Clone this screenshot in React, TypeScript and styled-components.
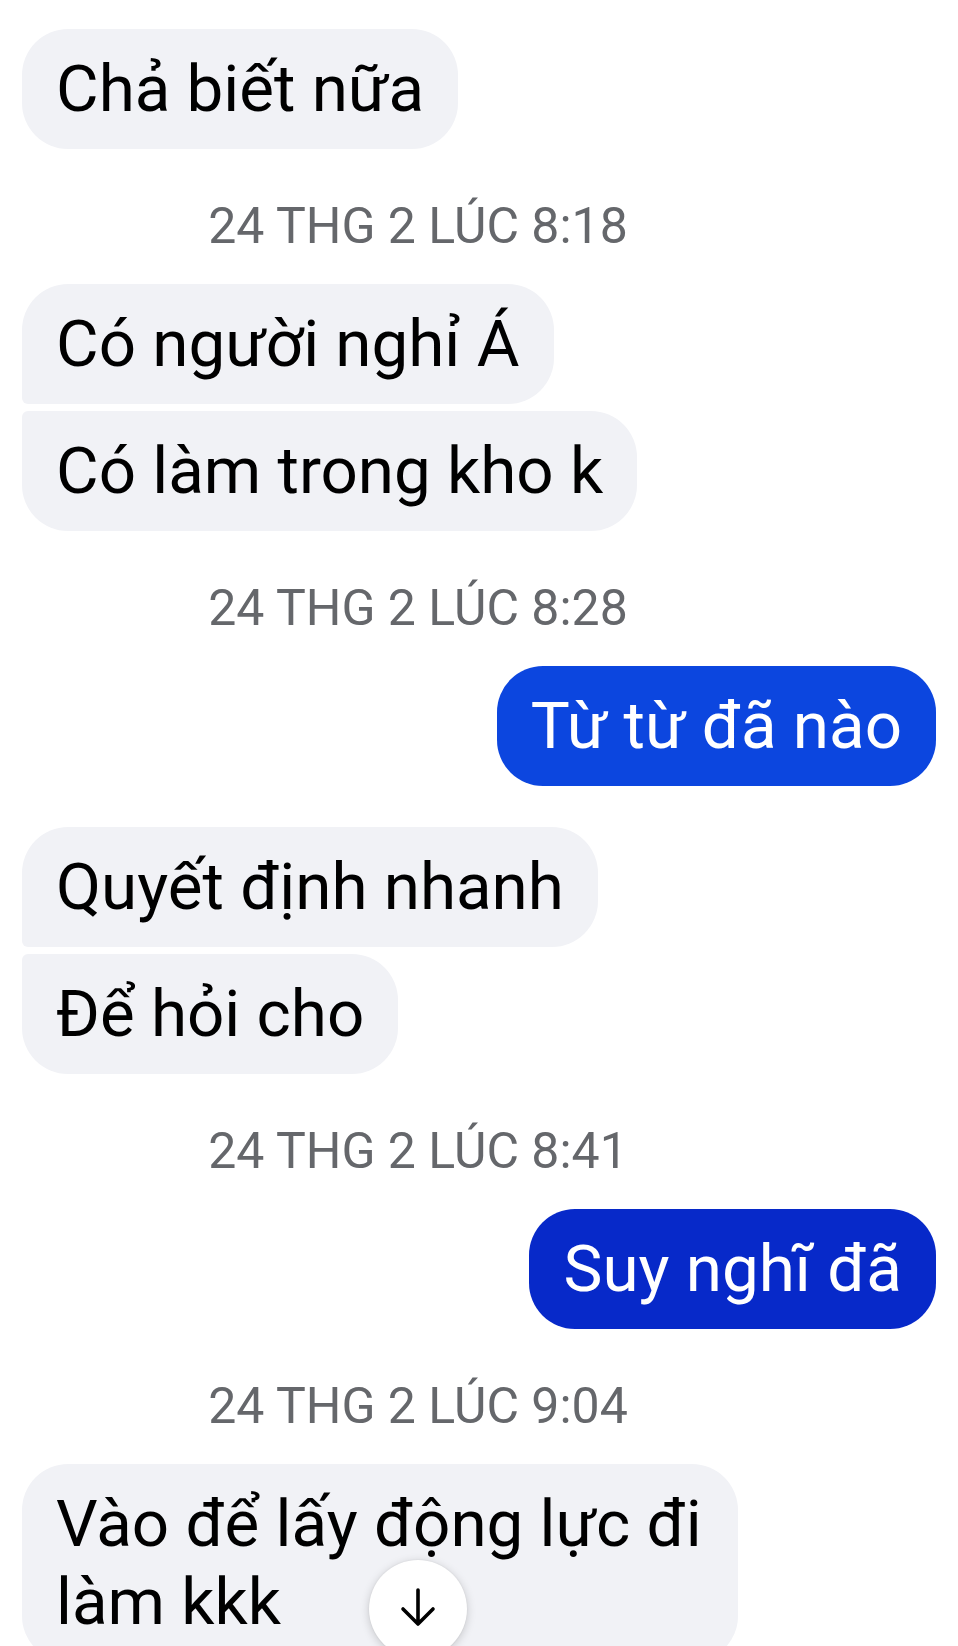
import React from "react";
import styled, { createGlobalStyle, css } from "styled-components";

const GlobalStyle = createGlobalStyle`
  html, body {
    margin: 0;
    padding: 0;
    background: #ffffff;
  }
  body {
    font-family: Roboto, "Noto Sans", "Liberation Sans", sans-serif;
  }
`;

const Page = styled.div`
  position: relative;
  width: 958px;
  height: 1646px;
  overflow: hidden;
  background: #ffffff;
  box-sizing: border-box;
  padding: 29px 22px 0 22px;
  display: flex;
  flex-direction: column;
`;

const Group = styled.div<{ $outgoing?: boolean }>`
  display: flex;
  flex-direction: column;
  align-items: ${(p) => (p.$outgoing ? "flex-end" : "flex-start")};
  gap: 7px;

  & + & {
    margin-top: 41px;
  }
`;

type Pos = "single" | "first" | "last";

const BIG = 46;
const SMALL = 6;

const radius = (pos: Pos, outgoing?: boolean) => {
  if (pos === "single") return `${BIG}px`;
  if (outgoing) {
    return pos === "first"
      ? `${BIG}px ${BIG}px ${SMALL}px ${BIG}px`
      : `${BIG}px ${SMALL}px ${BIG}px ${BIG}px`;
  }
  return pos === "first"
    ? `${BIG}px ${BIG}px ${BIG}px ${SMALL}px`
    : `${SMALL}px ${BIG}px ${BIG}px ${BIG}px`;
};

const Bubble = styled.div<{ $outgoing?: boolean; $pos: Pos; $tone?: "light" | "deep" }>`
  box-sizing: border-box;
  max-width: 716px;
  padding: 21px 34px;
  font-size: 65.5px;
  line-height: 78px;
  font-weight: 400;
  border-radius: ${(p) => radius(p.$pos, p.$outgoing)};
  ${(p) =>
    p.$outgoing
      ? css`
          color: #ffffff;
          background: ${p.$tone === "deep" ? "#0729c9" : "#0c46df"};
        `
      : css`
          color: #000000;
          background: #f1f2f6;
        `}
`;

const Timestamp = styled.div`
  margin: 48px 0 28px;
  padding-right: 122px;
  text-align: center;
  font-size: 50px;
  line-height: 59px;
  color: #65676b;
  font-weight: 400;
`;

const ScrollButton = styled.div`
  position: absolute;
  left: 369px;
  top: 1560px;
  width: 98px;
  height: 98px;
  border-radius: 50%;
  background: #ffffff;
  box-shadow: 0 2px 10px rgba(0, 0, 0, 0.18), 0 0 2px rgba(0, 0, 0, 0.08);
  display: flex;
  align-items: center;
  justify-content: center;
`;

const ArrowDown = () => (
  <svg width="40" height="40" viewBox="0 0 40 40" fill="none" style={{ marginTop: "-4px" }}>
    <path
      d="M20 3 V37 M5 22 L20 37 L35 22"
      stroke="#000"
      strokeWidth="3.6"
      strokeLinecap="round"
      strokeLinejoin="round"
    />
  </svg>
);

type Item =
  | { kind: "time"; text: string }
  | { kind: "group"; outgoing?: boolean; tone?: "light" | "deep"; messages: string[] };

const items: Item[] = [
  { kind: "group", messages: ["Chả biết nữa"] },
  { kind: "time", text: "24 THG 2 LÚC 8:18" },
  { kind: "group", messages: ["Có người nghỉ Á", "Có làm trong kho k"] },
  { kind: "time", text: "24 THG 2 LÚC 8:28" },
  { kind: "group", outgoing: true, tone: "light", messages: ["Từ từ đã nào"] },
  { kind: "group", messages: ["Quyết định nhanh", "Để hỏi cho"] },
  { kind: "time", text: "24 THG 2 LÚC 8:41" },
  { kind: "group", outgoing: true, tone: "deep", messages: ["Suy nghĩ đã"] },
  { kind: "time", text: "24 THG 2 LÚC 9:04" },
  { kind: "group", messages: ["Vào để lấy động lực đi làm kkk"] },
];

export default function App() {
  return (
    <>
      <GlobalStyle />
      <Page>
        {items.map((it, i) => {
          if (it.kind === "time") return <Timestamp key={i}>{it.text}</Timestamp>;
          const n = it.messages.length;
          return (
            <Group key={i} $outgoing={it.outgoing}>
              {it.messages.map((m, j) => (
                <Bubble
                  key={j}
                  $outgoing={it.outgoing}
                  $tone={it.tone}
                  $pos={n === 1 ? "single" : j === 0 ? "first" : "last"}
                >
                  {m}
                </Bubble>
              ))}
            </Group>
          );
        })}
        <ScrollButton>
          <ArrowDown />
        </ScrollButton>
      </Page>
    </>
  );
}
